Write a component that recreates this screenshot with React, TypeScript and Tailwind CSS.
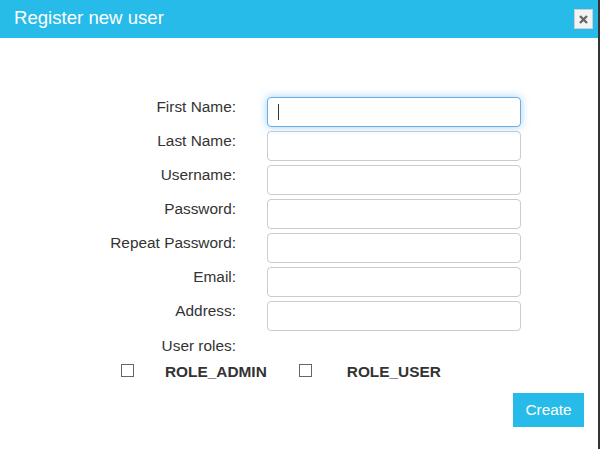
import React from "react";

const fields = [
  "First Name:",
  "Last Name:",
  "Username:",
  "Password:",
  "Repeat Password:",
  "Email:",
  "Address:",
];

function Box() {
  return <span className="block w-[13px] h-[13px] border border-[#666] bg-white" />;
}

export default function App() {
  return (
    <div
      className="w-[600px] h-[449px] bg-white border-r-2 border-[#333] text-[#333] overflow-hidden"
      style={{ fontFamily: '"Liberation Sans", Arial, sans-serif' }}
    >
      {/* Header */}
      <div className="h-[38px] bg-[#26bbe8] flex items-center justify-between pl-[14px] pr-[5px]">
        <h1 className="text-white text-[18.6px] leading-none pb-[1px]">Register new user</h1>
        <button className="w-[19px] h-[20px] bg-[#f3f3f3] border border-[#cfcfcf] flex items-center justify-center">
          <svg width="9" height="9" viewBox="0 0 9 9">
            <path d="M1 1 L8 8 M8 1 L1 8" stroke="#666" strokeWidth="2.4" />
          </svg>
        </button>
      </div>

      {/* Form */}
      <div className="pt-[59px]">
        <div className="grid grid-cols-[236px_254px] gap-x-[31px] gap-y-[4px]">
          {fields.map((label, i) => (
            <React.Fragment key={label}>
              <div className="text-right text-[15.4px] leading-[17px] pt-[1px]">{label}</div>
              {i === 0 ? (
                <div className="relative h-[30px] rounded-[4px] border border-[#66afe9] shadow-[0_0_8px_rgba(102,175,233,0.6)] bg-white">
                  <span className="absolute left-[10px] top-[6px] w-[1px] h-[16px] bg-[#333]" />
                </div>
              ) : (
                <div className="h-[30px] rounded-[4px] border border-[#ccc] bg-white" />
              )}
            </React.Fragment>
          ))}
        </div>

        <div className="grid grid-cols-[236px] mt-[6px]">
          <div className="text-right text-[15.4px] leading-[17px]">User roles:</div>
        </div>

        <div className="flex items-center mt-[7px] pl-[121px] text-[15.4px] font-bold leading-[17px]">
          <Box />
          <span className="ml-[31px] pt-[2px]">ROLE_ADMIN</span>
          <span className="ml-[32px]">
            <Box />
          </span>
          <span className="ml-[35px] pt-[2px]">ROLE_USER</span>
        </div>

        <div className="flex justify-end pr-[14px] mt-[13px]">
          <button className="w-[71px] h-[34px] bg-[#26bbe8] text-white text-[15.4px]">Create</button>
        </div>
      </div>
    </div>
  );
}
